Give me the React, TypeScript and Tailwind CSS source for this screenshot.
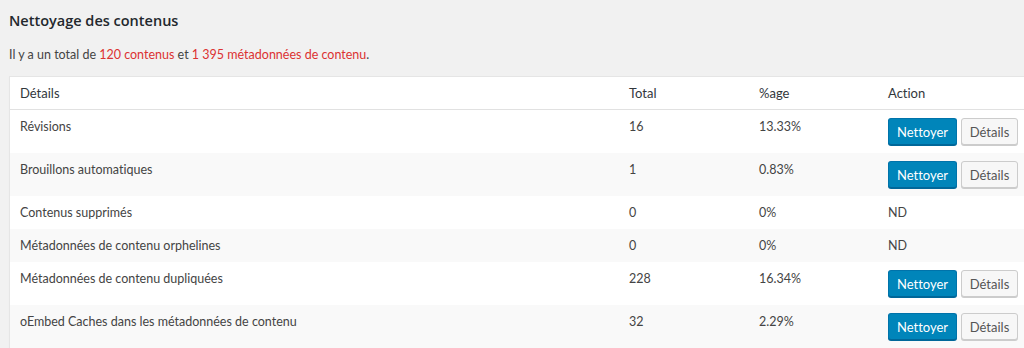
import React from "react";

interface Row {
  label: string;
  total: string;
  pct: string;
  canClean: boolean;
}

const rows: Row[] = [
  { label: "Révisions", total: "16", pct: "13.33%", canClean: true },
  { label: "Brouillons automatiques", total: "1", pct: "0.83%", canClean: true },
  { label: "Contenus supprimés", total: "0", pct: "0%", canClean: false },
  { label: "Métadonnées de contenu orphelines", total: "0", pct: "0%", canClean: false },
  { label: "Métadonnées de contenu dupliquées", total: "228", pct: "16.34%", canClean: true },
  { label: "oEmbed Caches dans les métadonnées de contenu", total: "32", pct: "2.29%", canClean: true },
];

const App = () => {
  return (
    <div
      className="w-[1024px] h-[348px] overflow-hidden bg-[#f1f1f1] text-[#444] [font-variant-ligatures:none]"
      style={{ fontFamily: 'Lato, "Open Sans", sans-serif' }}
    >
      <div className="pl-[9px] pt-[9px]">
        <h1
          className="text-[14.5px] leading-[24px] font-semibold text-[#23282d]"
          style={{ fontFamily: '"Open Sans", sans-serif' }}
        >
          Nettoyage des contenus
        </h1>
        <p className="mt-[14px] text-[12.5px] leading-[16px]">
          Il y a un total de{" "}
          <span className="text-[#dc3232]">120 contenus</span> et{" "}
          <span className="text-[#dc3232]">1 395 métadonnées de contenu</span>.
        </p>

        <div className="mt-[13px] w-[1040px] bg-white border border-[#e5e5e5] shadow-[0_1px_1px_rgba(0,0,0,0.04)]">
          <table className="w-full table-fixed border-collapse text-[12.5px]">
            <colgroup>
              <col className="w-[609px]" />
              <col className="w-[130px]" />
              <col className="w-[129px]" />
              <col />
            </colgroup>
            <thead>
              <tr className="border-b border-[#e1e1e1] text-left text-[#32373c]">
                <th className="px-[10px] pt-[8px] pb-[8px] font-normal text-[13px] leading-[16px]">Détails</th>
                <th className="px-[10px] pt-[8px] pb-[8px] font-normal text-[13px] leading-[16px]">Total</th>
                <th className="px-[10px] pt-[8px] pb-[8px] font-normal text-[13px] leading-[16px]">%age</th>
                <th className="px-[10px] pt-[8px] pb-[8px] font-normal text-[13px] leading-[16px]">Action</th>
              </tr>
            </thead>
            <tbody>
              {rows.map((row, i) => (
                <tr
                  key={row.label}
                  className={`align-top ${i % 2 === 1 ? "bg-[#f9f9f9]" : "bg-white"}`}
                >
                  <td className="px-[10px] pt-[9px] pb-[7px] leading-[16px]">{row.label}</td>
                  <td className="px-[10px] pt-[9px] pb-[7px] leading-[16px]">{row.total}</td>
                  <td className="px-[10px] pt-[9px] pb-[7px] leading-[16px]">{row.pct}</td>
                  <td className="px-[10px] py-[8px] leading-[16px]">
                    {row.canClean ? (
                      <div className="flex gap-[4px]">
                        <button className="h-[27px] w-[69px] rounded-[3px] border border-[#0073aa] border-b-[#006799] bg-[#0085ba] text-white text-[13px] shadow-[0_1px_0_#006799]">
                          Nettoyer
                        </button>
                        <button className="h-[27px] w-[57px] rounded-[3px] border border-[#cccccc] bg-[#f7f7f7] text-[#555] text-[13px] shadow-[0_1px_0_#cccccc]">
                          Détails
                        </button>
                      </div>
                    ) : (
                      <div className="pt-[1px]">ND</div>
                    )}
                  </td>
                </tr>
              ))}
            </tbody>
          </table>
        </div>
      </div>
    </div>
  );
};

export default App;
